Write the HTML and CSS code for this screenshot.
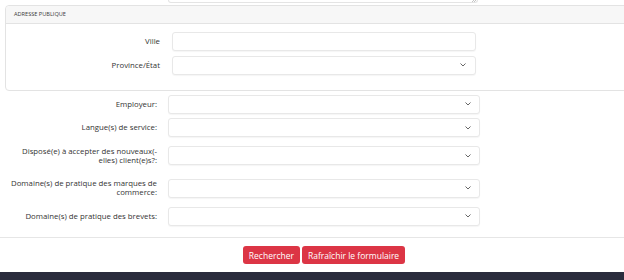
FILE: index.html
```html
<!DOCTYPE html>
<html lang="fr">
<head>
    <meta charset="UTF-8">
    <meta name="viewport" content="width=device-width, initial-scale=1.0">
    <title>Recherche</title>
    <link rel="stylesheet" href="styles.css">
</head>
<body>
    <div class="top-field">
        <svg class="grip" width="5" height="4" viewBox="0 0 5 4"><path d="M0 4 L4 0 M2 4 L5 1" stroke="#aaa" stroke-width="0.7"/></svg>
    </div>

    <section class="panel">
        <div class="panel-head">Adresse publique</div>
        <div class="panel-body">
            <div class="row">
                <label class="panel-label">Ville</label>
                <div class="field panel-field"></div>
            </div>
            <div class="row">
                <label class="panel-label">Province/État</label>
                <div class="field panel-field select">
                    <svg width="6" height="4" viewBox="0 0 6 4"><path d="M0.5 0.5 L3 3 L5.5 0.5" fill="none" stroke="#666" stroke-width="1"/></svg>
                </div>
            </div>
        </div>
    </section>

    <div class="form">
        <div class="row">
            <label>Employeur:</label>
            <div class="field select">
                <svg width="6" height="4" viewBox="0 0 6 4"><path d="M0.5 0.5 L3 3 L5.5 0.5" fill="none" stroke="#666" stroke-width="1"/></svg>
            </div>
        </div>
        <div class="row">
            <label>Langue(s) de service:</label>
            <div class="field select">
                <svg width="6" height="4" viewBox="0 0 6 4"><path d="M0.5 0.5 L3 3 L5.5 0.5" fill="none" stroke="#666" stroke-width="1"/></svg>
            </div>
        </div>
        <div class="row">
            <label>Disposé(e) à accepter des nouveaux(-<br>elles) client(e)s?:</label>
            <div class="field select">
                <svg width="6" height="4" viewBox="0 0 6 4"><path d="M0.5 0.5 L3 3 L5.5 0.5" fill="none" stroke="#666" stroke-width="1"/></svg>
            </div>
        </div>
        <div class="row">
            <label>Domaine(s) de pratique des marques de<br>commerce:</label>
            <div class="field select">
                <svg width="6" height="4" viewBox="0 0 6 4"><path d="M0.5 0.5 L3 3 L5.5 0.5" fill="none" stroke="#666" stroke-width="1"/></svg>
            </div>
        </div>
        <div class="row">
            <label>Domaine(s) de pratique des brevets:</label>
            <div class="field select">
                <svg width="6" height="4" viewBox="0 0 6 4"><path d="M0.5 0.5 L3 3 L5.5 0.5" fill="none" stroke="#666" stroke-width="1"/></svg>
            </div>
        </div>
    </div>

    <div class="actions">
        <button type="button" class="btn">Rechercher</button>
        <button type="button" class="btn">Rafraîchir le formulaire</button>
    </div>

    <footer></footer>
</body>
</html>
```

FILE: styles.css
```css
body {
    font-family: "Open Sans", sans-serif;
    font-size: 7.8px;
    color: #333;
    margin: 0;
    padding: 0;
    background: #fff;
    overflow: hidden;
}
.top-field {
    position: relative;
    margin-left: 168px;
    width: 308px;
    height: 2px;
    border: 1px solid #e4e4e4;
    border-top: none;
    border-radius: 0 0 3px 3px;
}
.grip {
    position: absolute;
    right: 0;
    top: -2px;
}
.panel {
    margin: 2px -10px 0 5px;
    border: 1px solid #e3e3e3;
    border-radius: 4px;
}
.panel-head {
    height: 17px;
    line-height: 17px;
    padding-left: 8px;
    background: #f7f7f7;
    border-bottom: 1px solid #e3e3e3;
    border-radius: 4px 4px 0 0;
    font-size: 5.6px;
    color: #3a3a3a;
    text-transform: uppercase;
}
.panel-body {
    padding: 8px 0 11px;
}
.row {
    display: flex;
    align-items: center;
    margin-bottom: 4.5px;
}
.row label {
    width: 149px;
    margin-left: 8px;
    margin-right: 11px;
    padding: 5px 0;
    line-height: 9px;
    text-align: right;
}
.row .panel-label {
    width: 154px;
    margin-left: 0;
    margin-right: 12px;
}
.field {
    box-sizing: border-box;
    width: 312px;
    height: 19px;
    background: #fff;
    border: 1px solid #e8e8e8;
    border-radius: 3px;
    box-shadow: 0 1px 1px rgba(0, 0, 0, 0.04);
}
.panel-field {
    width: 304px;
}
.select {
    display: flex;
    align-items: center;
    justify-content: flex-end;
    padding-right: 8px;
}
.panel-field.select {
    padding-right: 9px;
}
.form {
    padding: 3.5px 0 7px;
    border-bottom: 1px solid #e6e6e6;
}
.actions {
    display: flex;
    justify-content: center;
    gap: 2px;
    padding: 8px 0 8px 24px;
}
.btn {
    height: 18px;
    padding: 0 6px;
    background: #dc3545;
    color: #fff;
    border: none;
    border-radius: 3px;
    font-family: "Open Sans", sans-serif;
    font-size: 8.5px;
    font-weight: 500;
    cursor: pointer;
}
footer {
    height: 8px;
    background: #2a2c3d;
}
```
